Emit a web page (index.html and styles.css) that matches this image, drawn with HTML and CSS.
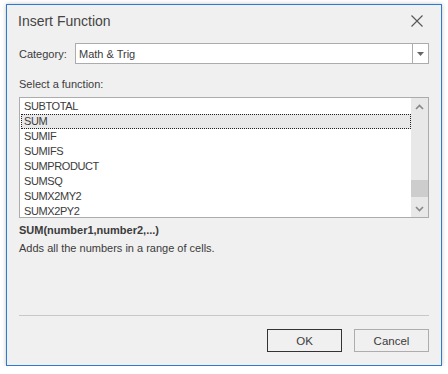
FILE: index.html
```html
<!DOCTYPE html>
<html lang="en">
<head>
    <meta charset="UTF-8">
    <title>Insert Function</title>
    <link rel="stylesheet" href="styles.css">
</head>
<body>
    <div class="dialog">
        <div class="titlebar">
            <span class="title">Insert Function</span>
            <span class="close">
                <svg width="12" height="12" viewBox="0 0 12 12"><path d="M0.5 0.5L11.5 11.5M11.5 0.5L0.5 11.5" stroke="#555" stroke-width="1.1" fill="none"/></svg>
            </span>
        </div>

        <div class="content">
            <div class="category">
                <span class="label">Category:</span>
                <div class="combo">
                    <span class="combo-text">Math &amp; Trig</span>
                    <span class="combo-btn">
                        <svg width="7" height="4" viewBox="0 0 7 4"><path d="M0 0H7L3.5 4Z" fill="#666"/></svg>
                    </span>
                </div>
            </div>

            <div class="select-label">Select a function:</div>

            <div class="listbox">
                <ul class="items">
                    <li>SUBTOTAL</li>
                    <li class="selected">SUM</li>
                    <li>SUMIF</li>
                    <li>SUMIFS</li>
                    <li>SUMPRODUCT</li>
                    <li>SUMSQ</li>
                    <li>SUMX2MY2</li>
                    <li>SUMX2PY2</li>
                </ul>
                <div class="scrollbar">
                    <span class="arrow">
                        <svg width="9" height="6" viewBox="0 0 9 6"><path d="M1 5L4.5 1.5L8 5" stroke="#888" stroke-width="1.6" fill="none"/></svg>
                    </span>
                    <div class="track">
                        <div class="thumb"></div>
                    </div>
                    <span class="arrow">
                        <svg width="9" height="6" viewBox="0 0 9 6"><path d="M1 1L4.5 4.5L8 1" stroke="#888" stroke-width="1.6" fill="none"/></svg>
                    </span>
                </div>
            </div>

            <div class="syntax">SUM(number1,number2,...)</div>
            <div class="desc">Adds all the numbers in a range of cells.</div>
        </div>

        <div class="footer">
            <button class="btn default">OK</button>
            <button class="btn">Cancel</button>
        </div>
    </div>
</body>
</html>
```

FILE: styles.css
```css
* {
    box-sizing: border-box;
    margin: 0;
    padding: 0;
}

body {
    background-color: #fff;
    font-family: "Liberation Sans", Arial, sans-serif;
    font-size: 11px;
    color: #3b3b3b;
}

.dialog {
    width: 436px;
    height: 362px;
    margin: 4px 0 0 6px;
    border: 1px solid #2b7bd4;
    background-color: #f0f0f0;
    display: flex;
    flex-direction: column;
    box-shadow: 0 0 4px rgba(0, 0, 0, 0.25);
}

.titlebar {
    height: 36px;
    display: flex;
    align-items: center;
    justify-content: space-between;
    padding: 0 18px 0 11px;
}

.title {
    font-size: 14px;
    color: #444;
    margin-top: -4px;
}

.close {
    display: flex;
    margin-top: -4px;
}

.content {
    padding: 0 12px;
    flex: 1;
}

.category {
    display: flex;
    align-items: center;
    margin-top: 2px;
}

.label {
    width: 56px;
}

.combo {
    flex: 1;
    height: 21px;
    border: 1px solid #acacac;
    background-color: #fff;
    display: flex;
    align-items: center;
}

.combo-text {
    flex: 1;
    padding-left: 3px;
}

.combo-btn {
    width: 16px;
    height: 100%;
    border-left: 1px solid #acacac;
    display: flex;
    align-items: center;
    justify-content: center;
}

.select-label {
    margin-top: 14px;
    height: 19px;
}

.listbox {
    height: 121px;
    border: 1px solid #acacac;
    background-color: #fff;
    display: flex;
}

.items {
    flex: 1;
    list-style: none;
    padding: 1px 0 0 1px;
}

.items li {
    height: 15px;
    line-height: 15px;
    padding-left: 3px;
    letter-spacing: -0.4px;
}

.items li.selected {
    background-color: #e8e8e8;
    outline: 1px dotted #222;
    outline-offset: -1px;
}

.scrollbar {
    width: 17px;
    background-color: #e8e8e8;
    display: flex;
    flex-direction: column;
}

.arrow {
    height: 17px;
    display: flex;
    align-items: center;
    justify-content: center;
}

.track {
    flex: 1;
    display: flex;
    flex-direction: column;
    justify-content: flex-end;
    padding-bottom: 3px;
}

.thumb {
    height: 17px;
    background-color: #cdcdcd;
}

.syntax {
    margin-top: 6px;
    font-weight: bold;
    height: 18px;
}

.desc {
    height: 18px;
}

.footer {
    margin: 0 12px;
    border-top: 1px solid #c8c8c8;
    padding: 13px 0 13px;
    display: flex;
    justify-content: flex-end;
    gap: 12px;
}

.btn {
    width: 75px;
    height: 23px;
    border: 1px solid #adadad;
    background-color: #f0f0f0;
    font-family: inherit;
    font-size: 11.5px;
    color: #3b3b3b;
}

.btn.default {
    border-color: #333;
}
```
